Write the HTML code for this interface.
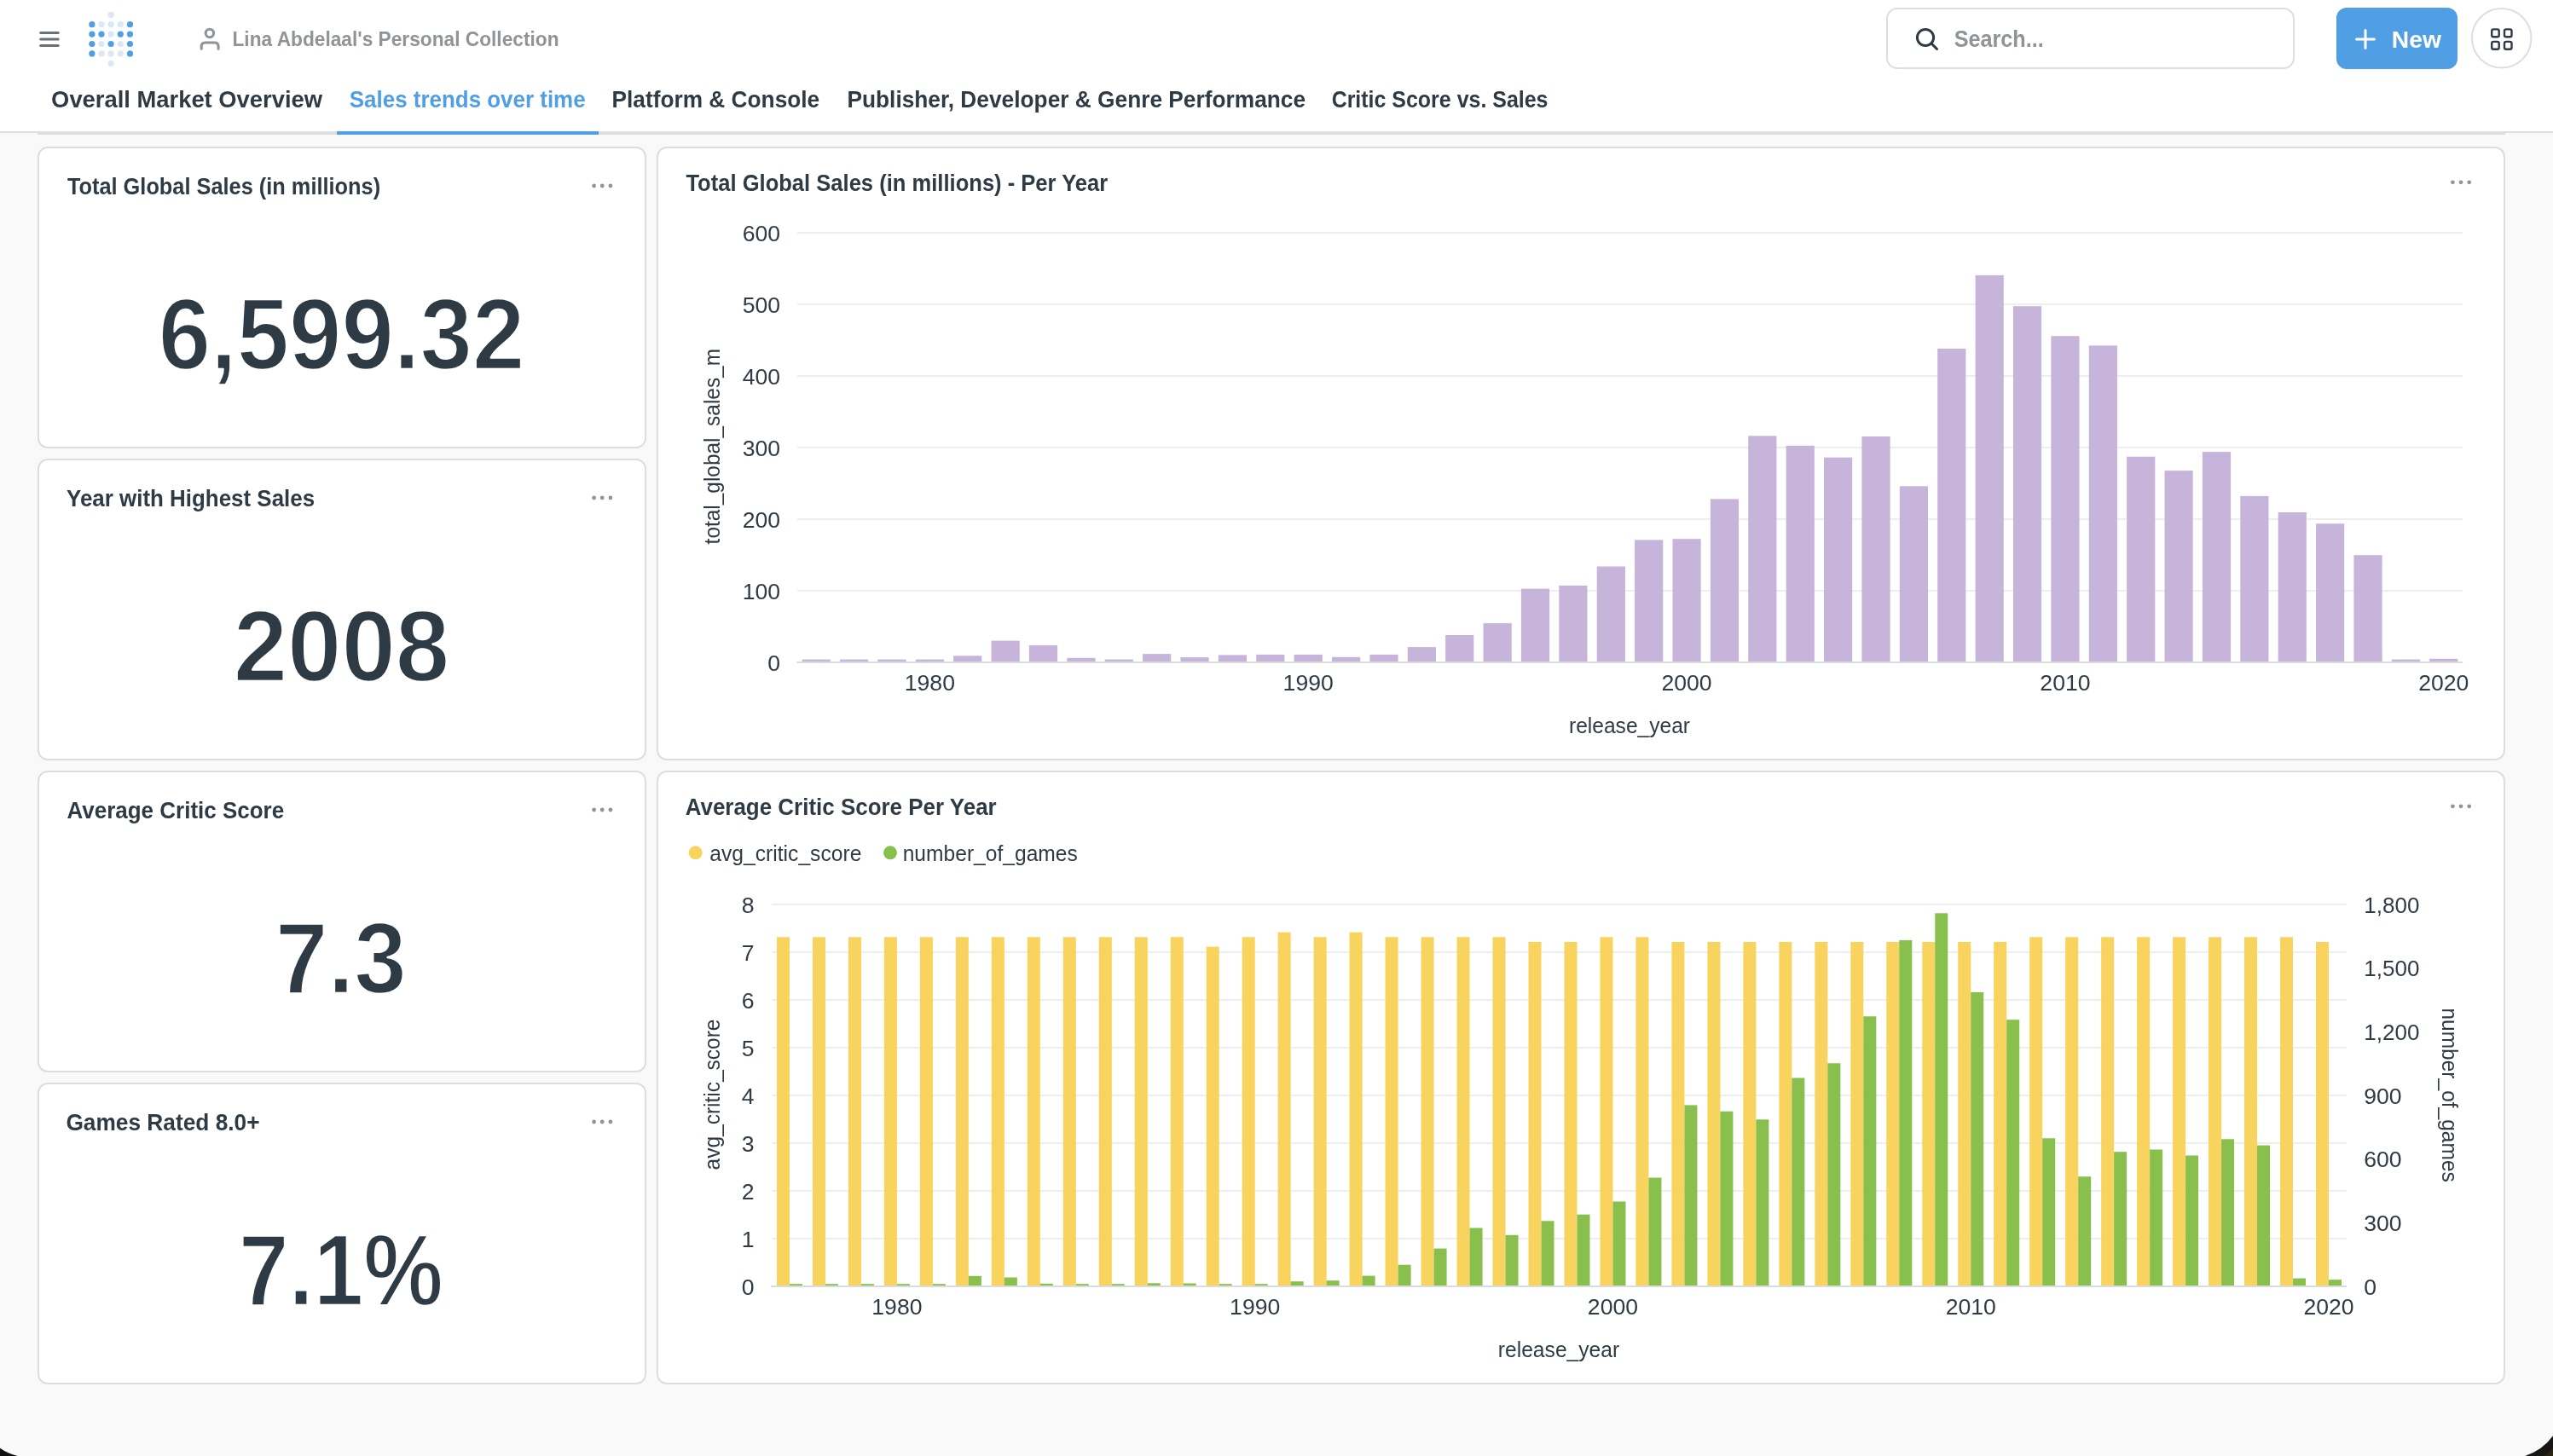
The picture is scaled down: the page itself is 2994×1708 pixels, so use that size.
<!DOCTYPE html>
<html><head><meta charset="utf-8"><title>Sales trends over time</title>
<style>
html,body{margin:0;padding:0;width:2994px;height:1708px;overflow:hidden;background:#f9f9f9;}
text{font-family:"Liberation Sans",sans-serif;}
</style></head><body>
<svg width="2994" height="1708" viewBox="0 0 2994 1708" style="display:block;will-change:transform;font-family:'Liberation Sans',sans-serif">
<rect x="0" y="0" width="2994" height="1708" fill="#f9f9f9"/>
<rect x="0" y="0" width="2994" height="154" fill="#ffffff"/>
<rect x="0" y="154" width="2994" height="2" fill="#dcdedf"/>
<rect x="44" y="156" width="2894" height="2" fill="#dcdedf"/>
<rect x="395" y="154" width="307" height="4" fill="#509ee3"/>
<line x1="47.7" y1="38.4" x2="68.2" y2="38.4" stroke="#6b7074" stroke-width="3" stroke-linecap="round"/>
<line x1="47.7" y1="46.0" x2="68.2" y2="46.0" stroke="#6b7074" stroke-width="3" stroke-linecap="round"/>
<line x1="47.7" y1="53.5" x2="68.2" y2="53.5" stroke="#6b7074" stroke-width="3" stroke-linecap="round"/>
<circle cx="130.1" cy="17.3" r="3.6" fill="#dce7f5"/>
<circle cx="107.9" cy="28.7" r="3.6" fill="#509ee3"/>
<circle cx="119.0" cy="28.7" r="3.6" fill="#dce7f5"/>
<circle cx="130.1" cy="28.7" r="3.6" fill="#dce7f5"/>
<circle cx="141.3" cy="28.7" r="3.6" fill="#dce7f5"/>
<circle cx="152.5" cy="28.7" r="3.6" fill="#509ee3"/>
<circle cx="107.9" cy="40.1" r="3.6" fill="#509ee3"/>
<circle cx="119.0" cy="40.1" r="3.6" fill="#509ee3"/>
<circle cx="130.1" cy="40.1" r="3.6" fill="#dce7f5"/>
<circle cx="141.3" cy="40.1" r="3.6" fill="#509ee3"/>
<circle cx="152.5" cy="40.1" r="3.6" fill="#509ee3"/>
<circle cx="107.9" cy="51.5" r="3.6" fill="#509ee3"/>
<circle cx="119.0" cy="51.5" r="3.6" fill="#dce7f5"/>
<circle cx="130.1" cy="51.5" r="3.6" fill="#509ee3"/>
<circle cx="141.3" cy="51.5" r="3.6" fill="#dce7f5"/>
<circle cx="152.5" cy="51.5" r="3.6" fill="#509ee3"/>
<circle cx="107.9" cy="62.9" r="3.6" fill="#509ee3"/>
<circle cx="119.0" cy="62.9" r="3.6" fill="#dce7f5"/>
<circle cx="130.1" cy="62.9" r="3.6" fill="#dce7f5"/>
<circle cx="141.3" cy="62.9" r="3.6" fill="#dce7f5"/>
<circle cx="152.5" cy="62.9" r="3.6" fill="#509ee3"/>
<circle cx="130.1" cy="74.3" r="3.6" fill="#dce7f5"/>
<circle cx="245.9" cy="39" r="4.7" fill="none" stroke="#8e9498" stroke-width="3.1"/>
<path d="M236.2,57.3 V54.5 Q236.2,50 240.7,50 H251.6 Q256.1,50 256.1,54.5 V57.3" fill="none" stroke="#8e9498" stroke-width="3.1" stroke-linecap="round"/>
<text x="272.50" y="53.90" font-size="24.70" font-weight="700" fill="#8e9498" textLength="383.02" lengthAdjust="spacingAndGlyphs">Lina Abdelaal&#39;s Personal Collection</text>
<rect x="2213" y="10" width="477" height="70" rx="12" ry="12" fill="#ffffff" stroke="#dcdedf" stroke-width="2"/>
<circle cx="2258" cy="44" r="9.6" fill="none" stroke="#2e3b45" stroke-width="3"/>
<line x1="2265.3" y1="51.3" x2="2271.5" y2="57.5" stroke="#2e3b45" stroke-width="3" stroke-linecap="round"/>
<text x="2291.65" y="55.00" font-size="28.00" font-weight="700" fill="#8e9498" textLength="105.09" lengthAdjust="spacingAndGlyphs">Search...</text>
<rect x="2740" y="9" width="142" height="72" rx="12" ry="12" fill="#509ee3"/>
<line x1="2774" y1="35.5" x2="2774" y2="56.5" stroke="#fff" stroke-width="3" stroke-linecap="round"/>
<line x1="2763.5" y1="46" x2="2784.5" y2="46" stroke="#fff" stroke-width="3" stroke-linecap="round"/>
<text x="2804.80" y="56.00" font-size="28.00" font-weight="700" fill="#ffffff" textLength="58.12" lengthAdjust="spacingAndGlyphs">New</text>
<circle cx="2933.7" cy="44.8" r="34.8" fill="#ffffff" stroke="#dcdedf" stroke-width="2"/>
<rect x="2922.2" y="34.4" width="8.5" height="8.8" rx="2" ry="2" fill="none" stroke="#2e3b45" stroke-width="2.4"/>
<rect x="2937.0" y="34.4" width="8.5" height="8.8" rx="2" ry="2" fill="none" stroke="#2e3b45" stroke-width="2.4"/>
<rect x="2922.2" y="48.9" width="8.5" height="8.8" rx="2" ry="2" fill="none" stroke="#2e3b45" stroke-width="2.4"/>
<rect x="2937.0" y="48.9" width="8.5" height="8.8" rx="2" ry="2" fill="none" stroke="#2e3b45" stroke-width="2.4"/>
<text x="60.10" y="126.30" font-size="28.00" font-weight="700" fill="#2e3b45" textLength="317.95" lengthAdjust="spacingAndGlyphs">Overall Market Overview</text>
<text x="409.80" y="126.30" font-size="28.00" font-weight="700" fill="#509ee3" textLength="276.83" lengthAdjust="spacingAndGlyphs">Sales trends over time</text>
<text x="717.55" y="126.30" font-size="28.00" font-weight="700" fill="#2e3b45" textLength="243.63" lengthAdjust="spacingAndGlyphs">Platform &amp; Console</text>
<text x="993.45" y="126.30" font-size="28.00" font-weight="700" fill="#2e3b45" textLength="537.62" lengthAdjust="spacingAndGlyphs">Publisher, Developer &amp; Genre Performance</text>
<text x="1561.65" y="126.30" font-size="28.00" font-weight="700" fill="#2e3b45" textLength="253.82" lengthAdjust="spacingAndGlyphs">Critic Score vs. Sales</text>
<rect x="45" y="173" width="712" height="352" rx="11" ry="11" fill="#ffffff" stroke="#dcdddd" stroke-width="2"/>
<text x="78.90" y="228.00" font-size="28.00" font-weight="700" fill="#2e3b45" textLength="367.22" lengthAdjust="spacingAndGlyphs">Total Global Sales (in millions)</text>
<circle cx="696.60" cy="218" r="2.4" fill="#929597"/>
<circle cx="706.20" cy="218" r="2.4" fill="#929597"/>
<circle cx="715.90" cy="218" r="2.4" fill="#929597"/>
<text x="185.69" y="432.70" font-size="118.09" font-weight="700" fill="#2e3b45" textLength="429.58" lengthAdjust="spacingAndGlyphs" stroke="#ffffff" stroke-width="2.4" stroke-linejoin="round">6,599.32</text>
<rect x="45" y="539" width="712" height="352" rx="11" ry="11" fill="#ffffff" stroke="#dcdddd" stroke-width="2"/>
<text x="78.10" y="594.00" font-size="28.00" font-weight="700" fill="#2e3b45" textLength="291.00" lengthAdjust="spacingAndGlyphs">Year with Highest Sales</text>
<circle cx="696.60" cy="584" r="2.4" fill="#929597"/>
<circle cx="706.20" cy="584" r="2.4" fill="#929597"/>
<circle cx="715.90" cy="584" r="2.4" fill="#929597"/>
<text x="273.66" y="798.70" font-size="118.09" font-weight="700" fill="#2e3b45" textLength="253.63" lengthAdjust="spacingAndGlyphs" stroke="#ffffff" stroke-width="2.4" stroke-linejoin="round">2008</text>
<rect x="45" y="905" width="712" height="352" rx="11" ry="11" fill="#ffffff" stroke="#dcdddd" stroke-width="2"/>
<text x="78.50" y="960.00" font-size="28.00" font-weight="700" fill="#2e3b45" textLength="254.62" lengthAdjust="spacingAndGlyphs">Average Critic Score</text>
<circle cx="696.60" cy="950" r="2.4" fill="#929597"/>
<circle cx="706.20" cy="950" r="2.4" fill="#929597"/>
<circle cx="715.90" cy="950" r="2.4" fill="#929597"/>
<text x="323.10" y="1164.70" font-size="118.09" font-weight="700" fill="#2e3b45" textLength="153.81" lengthAdjust="spacingAndGlyphs" stroke="#ffffff" stroke-width="2.4" stroke-linejoin="round">7.3</text>
<rect x="45" y="1271" width="712" height="352" rx="11" ry="11" fill="#ffffff" stroke="#dcdddd" stroke-width="2"/>
<text x="77.40" y="1326.00" font-size="28.00" font-weight="700" fill="#2e3b45" textLength="227.21" lengthAdjust="spacingAndGlyphs">Games Rated 8.0+</text>
<circle cx="696.60" cy="1316" r="2.4" fill="#929597"/>
<circle cx="706.20" cy="1316" r="2.4" fill="#929597"/>
<circle cx="715.90" cy="1316" r="2.4" fill="#929597"/>
<text x="280.06" y="1530.70" font-size="118.09" font-weight="700" fill="#2e3b45" textLength="239.92" lengthAdjust="spacingAndGlyphs" stroke="#ffffff" stroke-width="2.4" stroke-linejoin="round">7.1%</text>
<rect x="771" y="173" width="2166" height="718" rx="11" ry="11" fill="#ffffff" stroke="#dcdddd" stroke-width="2"/>
<text x="804.40" y="223.70" font-size="28.00" font-weight="700" fill="#2e3b45" textLength="494.81" lengthAdjust="spacingAndGlyphs">Total Global Sales (in millions) - Per Year</text>
<circle cx="2876.40" cy="213.8" r="2.4" fill="#929597"/>
<circle cx="2886.00" cy="213.8" r="2.4" fill="#929597"/>
<circle cx="2895.70" cy="213.8" r="2.4" fill="#929597"/>
<rect x="935.0" y="692" width="1953.0" height="2" fill="#eeeeee"/>
<rect x="935.0" y="608" width="1953.0" height="2" fill="#eeeeee"/>
<rect x="935.0" y="524" width="1953.0" height="2" fill="#eeeeee"/>
<rect x="935.0" y="440" width="1953.0" height="2" fill="#eeeeee"/>
<rect x="935.0" y="356" width="1953.0" height="2" fill="#eeeeee"/>
<rect x="935.0" y="272" width="1953.0" height="2" fill="#eeeeee"/>
<rect x="940.59" y="773.60" width="33.2" height="2.40" fill="#c7b4db"/>
<rect x="984.98" y="773.60" width="33.2" height="2.40" fill="#c7b4db"/>
<rect x="1029.37" y="773.60" width="33.2" height="2.40" fill="#c7b4db"/>
<rect x="1073.75" y="773.60" width="33.2" height="2.40" fill="#c7b4db"/>
<rect x="1118.14" y="769.30" width="33.2" height="6.70" fill="#c7b4db"/>
<rect x="1162.53" y="751.60" width="33.2" height="24.40" fill="#c7b4db"/>
<rect x="1206.91" y="757.00" width="33.2" height="19.00" fill="#c7b4db"/>
<rect x="1251.30" y="771.80" width="33.2" height="4.20" fill="#c7b4db"/>
<rect x="1295.68" y="773.60" width="33.2" height="2.40" fill="#c7b4db"/>
<rect x="1340.07" y="767.10" width="33.2" height="8.90" fill="#c7b4db"/>
<rect x="1384.46" y="771.10" width="33.2" height="4.90" fill="#c7b4db"/>
<rect x="1428.84" y="768.40" width="33.2" height="7.60" fill="#c7b4db"/>
<rect x="1473.23" y="767.90" width="33.2" height="8.10" fill="#c7b4db"/>
<rect x="1517.62" y="767.90" width="33.2" height="8.10" fill="#c7b4db"/>
<rect x="1562.00" y="770.80" width="33.2" height="5.20" fill="#c7b4db"/>
<rect x="1606.39" y="767.90" width="33.2" height="8.10" fill="#c7b4db"/>
<rect x="1650.77" y="759.10" width="33.2" height="16.90" fill="#c7b4db"/>
<rect x="1695.16" y="745.00" width="33.2" height="31.00" fill="#c7b4db"/>
<rect x="1739.55" y="731.10" width="33.2" height="44.90" fill="#c7b4db"/>
<rect x="1783.93" y="690.60" width="33.2" height="85.40" fill="#c7b4db"/>
<rect x="1828.32" y="686.90" width="33.2" height="89.10" fill="#c7b4db"/>
<rect x="1872.71" y="664.50" width="33.2" height="111.50" fill="#c7b4db"/>
<rect x="1917.09" y="633.40" width="33.2" height="142.60" fill="#c7b4db"/>
<rect x="1961.48" y="632.20" width="33.2" height="143.80" fill="#c7b4db"/>
<rect x="2005.87" y="585.40" width="33.2" height="190.60" fill="#c7b4db"/>
<rect x="2050.25" y="511.30" width="33.2" height="264.70" fill="#c7b4db"/>
<rect x="2094.64" y="522.80" width="33.2" height="253.20" fill="#c7b4db"/>
<rect x="2139.02" y="536.60" width="33.2" height="239.40" fill="#c7b4db"/>
<rect x="2183.41" y="512.00" width="33.2" height="264.00" fill="#c7b4db"/>
<rect x="2227.80" y="570.30" width="33.2" height="205.70" fill="#c7b4db"/>
<rect x="2272.18" y="409.00" width="33.2" height="367.00" fill="#c7b4db"/>
<rect x="2316.57" y="322.90" width="33.2" height="453.10" fill="#c7b4db"/>
<rect x="2360.96" y="359.20" width="33.2" height="416.80" fill="#c7b4db"/>
<rect x="2405.34" y="394.20" width="33.2" height="381.80" fill="#c7b4db"/>
<rect x="2449.73" y="405.40" width="33.2" height="370.60" fill="#c7b4db"/>
<rect x="2494.12" y="535.70" width="33.2" height="240.30" fill="#c7b4db"/>
<rect x="2538.50" y="552.10" width="33.2" height="223.90" fill="#c7b4db"/>
<rect x="2582.89" y="530.10" width="33.2" height="245.90" fill="#c7b4db"/>
<rect x="2627.27" y="581.90" width="33.2" height="194.10" fill="#c7b4db"/>
<rect x="2671.66" y="601.00" width="33.2" height="175.00" fill="#c7b4db"/>
<rect x="2716.05" y="614.30" width="33.2" height="161.70" fill="#c7b4db"/>
<rect x="2760.43" y="651.20" width="33.2" height="124.80" fill="#c7b4db"/>
<rect x="2804.82" y="773.60" width="33.2" height="2.40" fill="#c7b4db"/>
<rect x="2849.21" y="772.80" width="33.2" height="3.20" fill="#c7b4db"/>
<rect x="934.0" y="776" width="1954.0" height="2" fill="#dadcde"/>
<text x="900.21" y="786.70" font-size="26.60" font-weight="400" fill="#2e3b45" textLength="14.79" lengthAdjust="spacingAndGlyphs">0</text>
<text x="870.63" y="702.70" font-size="26.60" font-weight="400" fill="#2e3b45" textLength="44.38" lengthAdjust="spacingAndGlyphs">100</text>
<text x="870.63" y="618.70" font-size="26.60" font-weight="400" fill="#2e3b45" textLength="44.38" lengthAdjust="spacingAndGlyphs">200</text>
<text x="870.63" y="534.70" font-size="26.60" font-weight="400" fill="#2e3b45" textLength="44.38" lengthAdjust="spacingAndGlyphs">300</text>
<text x="870.63" y="450.70" font-size="26.60" font-weight="400" fill="#2e3b45" textLength="44.38" lengthAdjust="spacingAndGlyphs">400</text>
<text x="870.63" y="366.70" font-size="26.60" font-weight="400" fill="#2e3b45" textLength="44.38" lengthAdjust="spacingAndGlyphs">500</text>
<text x="870.63" y="282.70" font-size="26.60" font-weight="400" fill="#2e3b45" textLength="44.38" lengthAdjust="spacingAndGlyphs">600</text>
<text x="1060.76" y="810.00" font-size="26.60" font-weight="400" fill="#2e3b45" textLength="59.18" lengthAdjust="spacingAndGlyphs">1980</text>
<text x="1504.62" y="810.00" font-size="26.60" font-weight="400" fill="#2e3b45" textLength="59.18" lengthAdjust="spacingAndGlyphs">1990</text>
<text x="1948.49" y="810.00" font-size="26.60" font-weight="400" fill="#2e3b45" textLength="59.18" lengthAdjust="spacingAndGlyphs">2000</text>
<text x="2392.35" y="810.00" font-size="26.60" font-weight="400" fill="#2e3b45" textLength="59.18" lengthAdjust="spacingAndGlyphs">2010</text>
<text x="2836.21" y="810.00" font-size="26.60" font-weight="400" fill="#2e3b45" textLength="59.18" lengthAdjust="spacingAndGlyphs">2020</text>
<text x="1840.00" y="859.90" font-size="25.50" font-weight="400" fill="#2e3b45" textLength="142.01" lengthAdjust="spacingAndGlyphs">release_year</text>
<g transform="translate(843.60,524.60) rotate(-90)"><text x="-113.81" y="0" font-size="25.50" font-weight="400" fill="#2e3b45" textLength="229.42" lengthAdjust="spacingAndGlyphs">total_global_sales_m</text></g>
<rect x="771" y="905" width="2166" height="718" rx="11" ry="11" fill="#ffffff" stroke="#dcdddd" stroke-width="2"/>
<text x="803.70" y="955.70" font-size="28.00" font-weight="700" fill="#2e3b45" textLength="365.01" lengthAdjust="spacingAndGlyphs">Average Critic Score Per Year</text>
<circle cx="2876.40" cy="945.8" r="2.4" fill="#929597"/>
<circle cx="2886.00" cy="945.8" r="2.4" fill="#929597"/>
<circle cx="2895.70" cy="945.8" r="2.4" fill="#929597"/>
<circle cx="815.7" cy="1000.3" r="8" fill="#f8d35e"/>
<text x="832.35" y="1009.80" font-size="25.50" font-weight="400" fill="#2e3b45" textLength="178.02" lengthAdjust="spacingAndGlyphs">avg_critic_score</text>
<circle cx="1044" cy="1000.3" r="8" fill="#88bf4d"/>
<text x="1058.65" y="1009.80" font-size="25.50" font-weight="400" fill="#2e3b45" textLength="205.24" lengthAdjust="spacingAndGlyphs">number_of_games</text>
<rect x="905.0" y="1452" width="1847.0" height="2" fill="#eeeeee"/>
<rect x="905.0" y="1396" width="1847.0" height="2" fill="#eeeeee"/>
<rect x="905.0" y="1340" width="1847.0" height="2" fill="#eeeeee"/>
<rect x="905.0" y="1284" width="1847.0" height="2" fill="#eeeeee"/>
<rect x="905.0" y="1228" width="1847.0" height="2" fill="#eeeeee"/>
<rect x="905.0" y="1172" width="1847.0" height="2" fill="#eeeeee"/>
<rect x="905.0" y="1116" width="1847.0" height="2" fill="#eeeeee"/>
<rect x="905.0" y="1060" width="1847.0" height="2" fill="#eeeeee"/>
<rect x="910.99" y="1099.30" width="15" height="408.70" fill="#f8d35e"/>
<rect x="925.99" y="1506.20" width="15" height="1.80" fill="#88bf4d"/>
<rect x="952.97" y="1099.30" width="15" height="408.70" fill="#f8d35e"/>
<rect x="967.97" y="1506.20" width="15" height="1.80" fill="#88bf4d"/>
<rect x="994.94" y="1099.30" width="15" height="408.70" fill="#f8d35e"/>
<rect x="1009.94" y="1506.20" width="15" height="1.80" fill="#88bf4d"/>
<rect x="1036.92" y="1099.30" width="15" height="408.70" fill="#f8d35e"/>
<rect x="1051.92" y="1506.20" width="15" height="1.80" fill="#88bf4d"/>
<rect x="1078.90" y="1099.30" width="15" height="408.70" fill="#f8d35e"/>
<rect x="1093.90" y="1506.20" width="15" height="1.80" fill="#88bf4d"/>
<rect x="1120.88" y="1099.30" width="15" height="408.70" fill="#f8d35e"/>
<rect x="1135.88" y="1496.80" width="15" height="11.20" fill="#88bf4d"/>
<rect x="1162.85" y="1099.30" width="15" height="408.70" fill="#f8d35e"/>
<rect x="1177.85" y="1498.50" width="15" height="9.50" fill="#88bf4d"/>
<rect x="1204.83" y="1099.30" width="15" height="408.70" fill="#f8d35e"/>
<rect x="1219.83" y="1505.80" width="15" height="2.20" fill="#88bf4d"/>
<rect x="1246.81" y="1099.30" width="15" height="408.70" fill="#f8d35e"/>
<rect x="1261.81" y="1506.20" width="15" height="1.80" fill="#88bf4d"/>
<rect x="1288.78" y="1099.30" width="15" height="408.70" fill="#f8d35e"/>
<rect x="1303.78" y="1506.20" width="15" height="1.80" fill="#88bf4d"/>
<rect x="1330.76" y="1099.30" width="15" height="408.70" fill="#f8d35e"/>
<rect x="1345.76" y="1505.30" width="15" height="2.70" fill="#88bf4d"/>
<rect x="1372.74" y="1099.30" width="15" height="408.70" fill="#f8d35e"/>
<rect x="1387.74" y="1505.50" width="15" height="2.50" fill="#88bf4d"/>
<rect x="1414.72" y="1110.60" width="15" height="397.40" fill="#f8d35e"/>
<rect x="1429.72" y="1506.20" width="15" height="1.80" fill="#88bf4d"/>
<rect x="1456.69" y="1099.30" width="15" height="408.70" fill="#f8d35e"/>
<rect x="1471.69" y="1506.20" width="15" height="1.80" fill="#88bf4d"/>
<rect x="1498.67" y="1093.70" width="15" height="414.30" fill="#f8d35e"/>
<rect x="1513.67" y="1503.20" width="15" height="4.80" fill="#88bf4d"/>
<rect x="1540.65" y="1099.30" width="15" height="408.70" fill="#f8d35e"/>
<rect x="1555.65" y="1502.20" width="15" height="5.80" fill="#88bf4d"/>
<rect x="1582.62" y="1093.70" width="15" height="414.30" fill="#f8d35e"/>
<rect x="1597.62" y="1496.60" width="15" height="11.40" fill="#88bf4d"/>
<rect x="1624.60" y="1099.30" width="15" height="408.70" fill="#f8d35e"/>
<rect x="1639.60" y="1483.70" width="15" height="24.30" fill="#88bf4d"/>
<rect x="1666.58" y="1099.30" width="15" height="408.70" fill="#f8d35e"/>
<rect x="1681.58" y="1464.60" width="15" height="43.40" fill="#88bf4d"/>
<rect x="1708.56" y="1099.30" width="15" height="408.70" fill="#f8d35e"/>
<rect x="1723.56" y="1440.50" width="15" height="67.50" fill="#88bf4d"/>
<rect x="1750.53" y="1099.30" width="15" height="408.70" fill="#f8d35e"/>
<rect x="1765.53" y="1448.80" width="15" height="59.20" fill="#88bf4d"/>
<rect x="1792.51" y="1105.00" width="15" height="403.00" fill="#f8d35e"/>
<rect x="1807.51" y="1432.30" width="15" height="75.70" fill="#88bf4d"/>
<rect x="1834.49" y="1105.00" width="15" height="403.00" fill="#f8d35e"/>
<rect x="1849.49" y="1424.70" width="15" height="83.30" fill="#88bf4d"/>
<rect x="1876.47" y="1099.30" width="15" height="408.70" fill="#f8d35e"/>
<rect x="1891.47" y="1409.50" width="15" height="98.50" fill="#88bf4d"/>
<rect x="1918.44" y="1099.30" width="15" height="408.70" fill="#f8d35e"/>
<rect x="1933.44" y="1381.50" width="15" height="126.50" fill="#88bf4d"/>
<rect x="1960.42" y="1105.00" width="15" height="403.00" fill="#f8d35e"/>
<rect x="1975.42" y="1296.40" width="15" height="211.60" fill="#88bf4d"/>
<rect x="2002.40" y="1105.00" width="15" height="403.00" fill="#f8d35e"/>
<rect x="2017.40" y="1303.70" width="15" height="204.30" fill="#88bf4d"/>
<rect x="2044.38" y="1105.00" width="15" height="403.00" fill="#f8d35e"/>
<rect x="2059.38" y="1313.30" width="15" height="194.70" fill="#88bf4d"/>
<rect x="2086.35" y="1105.00" width="15" height="403.00" fill="#f8d35e"/>
<rect x="2101.35" y="1264.50" width="15" height="243.50" fill="#88bf4d"/>
<rect x="2128.33" y="1105.00" width="15" height="403.00" fill="#f8d35e"/>
<rect x="2143.33" y="1247.30" width="15" height="260.70" fill="#88bf4d"/>
<rect x="2170.31" y="1105.00" width="15" height="403.00" fill="#f8d35e"/>
<rect x="2185.31" y="1192.30" width="15" height="315.70" fill="#88bf4d"/>
<rect x="2212.28" y="1105.00" width="15" height="403.00" fill="#f8d35e"/>
<rect x="2227.28" y="1102.90" width="15" height="405.10" fill="#88bf4d"/>
<rect x="2254.26" y="1105.00" width="15" height="403.00" fill="#f8d35e"/>
<rect x="2269.26" y="1071.30" width="15" height="436.70" fill="#88bf4d"/>
<rect x="2296.24" y="1105.00" width="15" height="403.00" fill="#f8d35e"/>
<rect x="2311.24" y="1163.90" width="15" height="344.10" fill="#88bf4d"/>
<rect x="2338.22" y="1105.00" width="15" height="403.00" fill="#f8d35e"/>
<rect x="2353.22" y="1196.20" width="15" height="311.80" fill="#88bf4d"/>
<rect x="2380.19" y="1099.30" width="15" height="408.70" fill="#f8d35e"/>
<rect x="2395.19" y="1335.30" width="15" height="172.70" fill="#88bf4d"/>
<rect x="2422.17" y="1099.30" width="15" height="408.70" fill="#f8d35e"/>
<rect x="2437.17" y="1380.20" width="15" height="127.80" fill="#88bf4d"/>
<rect x="2464.15" y="1099.30" width="15" height="408.70" fill="#f8d35e"/>
<rect x="2479.15" y="1351.20" width="15" height="156.80" fill="#88bf4d"/>
<rect x="2506.12" y="1099.30" width="15" height="408.70" fill="#f8d35e"/>
<rect x="2521.12" y="1348.50" width="15" height="159.50" fill="#88bf4d"/>
<rect x="2548.10" y="1099.30" width="15" height="408.70" fill="#f8d35e"/>
<rect x="2563.10" y="1355.50" width="15" height="152.50" fill="#88bf4d"/>
<rect x="2590.08" y="1099.30" width="15" height="408.70" fill="#f8d35e"/>
<rect x="2605.08" y="1336.30" width="15" height="171.70" fill="#88bf4d"/>
<rect x="2632.06" y="1099.30" width="15" height="408.70" fill="#f8d35e"/>
<rect x="2647.06" y="1343.60" width="15" height="164.40" fill="#88bf4d"/>
<rect x="2674.03" y="1099.30" width="15" height="408.70" fill="#f8d35e"/>
<rect x="2689.03" y="1499.60" width="15" height="8.40" fill="#88bf4d"/>
<rect x="2716.01" y="1105.00" width="15" height="403.00" fill="#f8d35e"/>
<rect x="2731.01" y="1501.20" width="15" height="6.80" fill="#88bf4d"/>
<rect x="904.0" y="1508" width="1848.0" height="2" fill="#dadcde"/>
<text x="869.81" y="1518.60" font-size="26.60" font-weight="400" fill="#2e3b45" textLength="14.79" lengthAdjust="spacingAndGlyphs">0</text>
<text x="869.81" y="1462.60" font-size="26.60" font-weight="400" fill="#2e3b45" textLength="14.79" lengthAdjust="spacingAndGlyphs">1</text>
<text x="869.81" y="1406.60" font-size="26.60" font-weight="400" fill="#2e3b45" textLength="14.79" lengthAdjust="spacingAndGlyphs">2</text>
<text x="869.81" y="1350.60" font-size="26.60" font-weight="400" fill="#2e3b45" textLength="14.79" lengthAdjust="spacingAndGlyphs">3</text>
<text x="869.81" y="1294.60" font-size="26.60" font-weight="400" fill="#2e3b45" textLength="14.79" lengthAdjust="spacingAndGlyphs">4</text>
<text x="869.81" y="1238.60" font-size="26.60" font-weight="400" fill="#2e3b45" textLength="14.79" lengthAdjust="spacingAndGlyphs">5</text>
<text x="869.81" y="1182.60" font-size="26.60" font-weight="400" fill="#2e3b45" textLength="14.79" lengthAdjust="spacingAndGlyphs">6</text>
<text x="869.81" y="1126.60" font-size="26.60" font-weight="400" fill="#2e3b45" textLength="14.79" lengthAdjust="spacingAndGlyphs">7</text>
<text x="869.81" y="1070.60" font-size="26.60" font-weight="400" fill="#2e3b45" textLength="14.79" lengthAdjust="spacingAndGlyphs">8</text>
<text x="2772.20" y="1518.60" font-size="26.60" font-weight="400" fill="#2e3b45" textLength="14.79" lengthAdjust="spacingAndGlyphs">0</text>
<text x="2772.20" y="1443.93" font-size="26.60" font-weight="400" fill="#2e3b45" textLength="44.38" lengthAdjust="spacingAndGlyphs">300</text>
<text x="2772.20" y="1369.27" font-size="26.60" font-weight="400" fill="#2e3b45" textLength="44.38" lengthAdjust="spacingAndGlyphs">600</text>
<text x="2772.20" y="1294.60" font-size="26.60" font-weight="400" fill="#2e3b45" textLength="44.38" lengthAdjust="spacingAndGlyphs">900</text>
<text x="2772.35" y="1219.93" font-size="26.60" font-weight="400" fill="#2e3b45" textLength="65.15" lengthAdjust="spacingAndGlyphs">1,200</text>
<text x="2772.35" y="1145.27" font-size="26.60" font-weight="400" fill="#2e3b45" textLength="65.15" lengthAdjust="spacingAndGlyphs">1,500</text>
<text x="2772.35" y="1070.60" font-size="26.60" font-weight="400" fill="#2e3b45" textLength="65.15" lengthAdjust="spacingAndGlyphs">1,800</text>
<text x="1022.33" y="1541.60" font-size="26.60" font-weight="400" fill="#2e3b45" textLength="59.18" lengthAdjust="spacingAndGlyphs">1980</text>
<text x="1442.10" y="1541.60" font-size="26.60" font-weight="400" fill="#2e3b45" textLength="59.18" lengthAdjust="spacingAndGlyphs">1990</text>
<text x="1861.87" y="1541.60" font-size="26.60" font-weight="400" fill="#2e3b45" textLength="59.18" lengthAdjust="spacingAndGlyphs">2000</text>
<text x="2281.65" y="1541.60" font-size="26.60" font-weight="400" fill="#2e3b45" textLength="59.18" lengthAdjust="spacingAndGlyphs">2010</text>
<text x="2701.42" y="1541.60" font-size="26.60" font-weight="400" fill="#2e3b45" textLength="59.18" lengthAdjust="spacingAndGlyphs">2020</text>
<text x="1756.79" y="1591.70" font-size="25.50" font-weight="400" fill="#2e3b45" textLength="142.44" lengthAdjust="spacingAndGlyphs">release_year</text>
<g transform="translate(843.60,1284.00) rotate(-90)"><text x="-88.41" y="0" font-size="25.50" font-weight="400" fill="#2e3b45" textLength="176.83" lengthAdjust="spacingAndGlyphs">avg_critic_score</text></g>
<g transform="translate(2864.40,1284.80) rotate(90)"><text x="-102.42" y="0" font-size="25.50" font-weight="400" fill="#2e3b45" textLength="204.44" lengthAdjust="spacingAndGlyphs">number_of_games</text></g>
<path d="M0,1698.7 Q9,1705 20.6,1708 L0,1708 Z" fill="#111111"/>
<path d="M2994,1684.3 Q2982,1701 2961.2,1708 L2994,1708 Z" fill="#161616"/>
<path d="M2994,1699 Q2988,1705 2983,1708 L2994,1708 Z" fill="#2a2410"/>
</svg>
</body></html>
